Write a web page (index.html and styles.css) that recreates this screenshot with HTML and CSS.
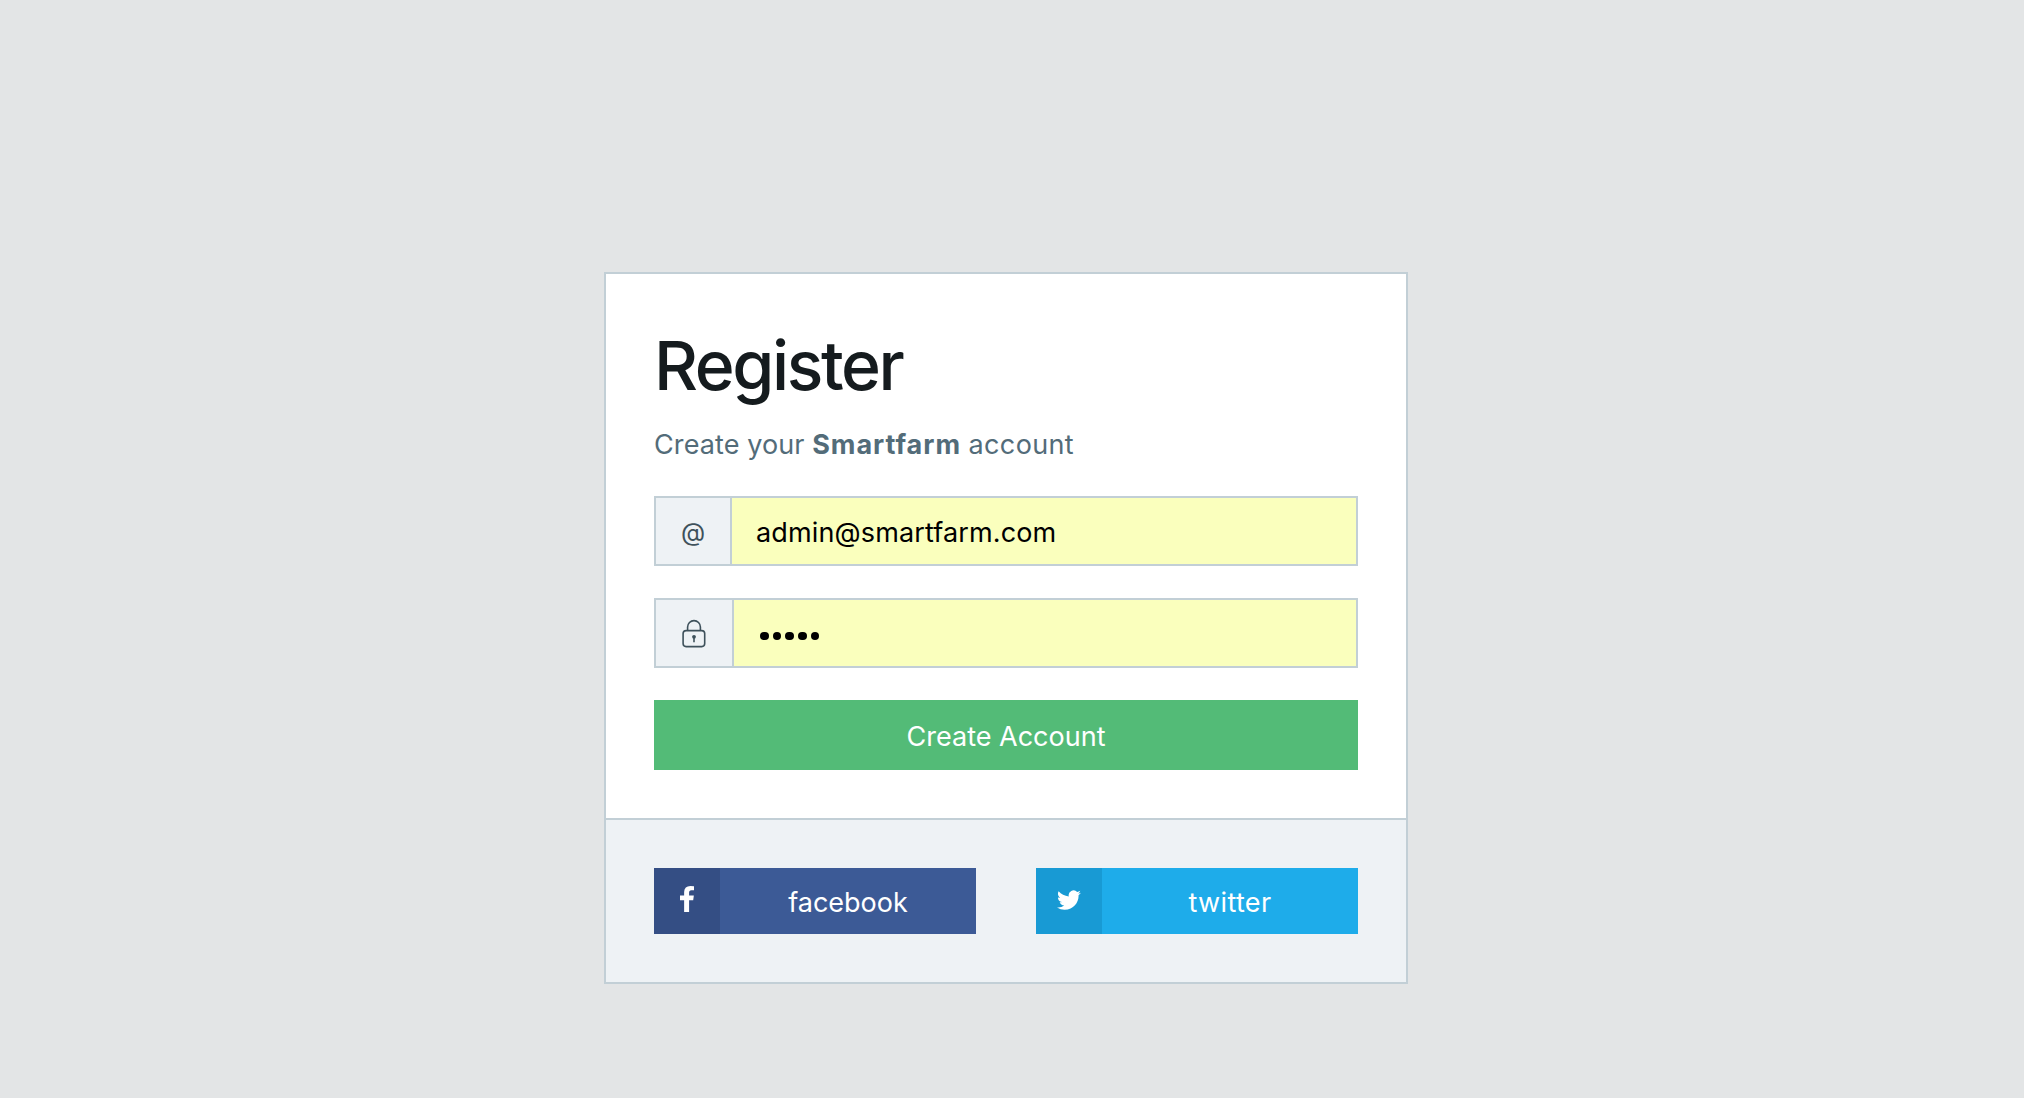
FILE: index.html
```html
<!DOCTYPE html>
<html lang="en">
<head>
<meta charset="utf-8">
<title>Register</title>
<link rel="stylesheet" href="styles.css">
</head>
<body>
<main class="card">
  <form class="card-body">
    <h1 class="title">Register</h1>
    <p class="lead"><span class="lead-start">Create your</span> <strong>Smartfarm</strong> <span class="lead-end">account</span></p>
    <div class="input-group">
      <span class="addon">@</span>
      <div class="field"><span class="email">admin@smartfarm.com</span></div>
    </div>
    <div class="input-group">
      <span class="addon addon-lock">
        <svg class="lock" width="24" height="30" viewBox="0 0 24 30" fill="none" stroke="currentColor" stroke-width="1.6">
          <rect x="1.1" y="11.6" width="21.6" height="16" rx="3"/>
          <path d="M5.6 11.5V8a6.4 6.4 0 0 1 12.8 0v3.5"/>
          <circle cx="12" cy="17.8" r="1.9" fill="currentColor" stroke="none"/>
          <path d="M12 18v5.2"/>
        </svg>
      </span>
      <div class="field field-password"><span class="dot"></span><span class="dot"></span><span class="dot"></span><span class="dot"></span><span class="dot"></span></div>
    </div>
    <button class="submit" type="button"><span>Create Account</span></button>
  </form>
  <footer class="card-footer">
    <a class="social facebook">
      <span class="social-icon">
        <svg class="fb" width="14" height="26" viewBox="95 -1536 864 1664" preserveAspectRatio="none" fill="#fff"><path d="M959 -1524V-1260H802Q716 -1260 686 -1224Q656 -1188 656 -1116V-927H949L910 -631H656V128H350V-631H95V-927H350V-1145Q350 -1331 454 -1433.500Q558 -1536 731 -1536Q878 -1536 959 -1524Z"/></svg>
      </span>
      <span class="social-label">facebook</span>
    </a>
    <a class="social twitter">
      <span class="social-icon">
        <svg class="tw" width="24" height="20" viewBox="0 1.8 24 20.3" preserveAspectRatio="none" fill="#fff"><path d="M23.950 4.570a10 10 0 0 1-2.820.770 4.960 4.960 0 0 0 2.160-2.720c-.950.550-2 .960-3.130 1.180a4.920 4.920 0 0 0-8.380 4.480C7.690 8.090 4.070 6.130 1.640 3.160a4.820 4.820 0 0 0-.670 2.480c0 1.710.870 3.210 2.190 4.100a4.900 4.900 0 0 1-2.230-.620v.060a4.920 4.920 0 0 0 3.950 4.830 5 5 0 0 1-2.210.080 4.940 4.940 0 0 0 4.600 3.420A9.870 9.870 0 0 1 0 19.540a13.990 13.990 0 0 0 7.560 2.210c9.050 0 14-7.500 14-13.980 0-.210 0-.420-.020-.630a9.940 9.940 0 0 0 2.410-2.570z"/></svg>
      </span>
      <span class="social-label">twitter</span>
    </a>
  </footer>
</main>
</body>
</html>
```
FILE: styles.css
```css
* { box-sizing: border-box; }

body {
  margin: 0;
  padding: 272px 616px 114px 604px;
  background: #e3e5e6;
  font-family: Inter, "Liberation Sans", sans-serif;
  font-size: 27px;
  line-height: 42px;
  color: #151b1e;
}

.card {
  width: 804px;
  height: 712px;
  border: 2px solid #c2cfd6;
  background: #fff;
}

.card-body {
  height: 546px;
  padding: 49px 48px 48px;
  border-bottom: 2px solid #c2cfd6;
}

.title {
  margin: 0 0 17px;
  font-size: 68px;
  font-weight: 500;
  line-height: 84px;
  letter-spacing: -2.4px;
}

.lead {
  margin: 0 0 30px;
  color: #536c79;
}

.lead-start { letter-spacing: 0.1px; }
.lead-end { letter-spacing: 0.35px; }

.lead strong {
  font-weight: 700;
  letter-spacing: 0.95px;
}

.input-group {
  display: flex;
  height: 70px;
  margin-bottom: 32px;
  border: 2px solid #c2cfd6;
}

.addon {
  display: flex;
  align-items: center;
  justify-content: center;
  width: 76px;
  padding-top: 2px;
  border-right: 2px solid #c2cfd6;
  background: #eef2f5;
  color: #3e515b;
  font-size: 25px;
}

.addon-lock { width: 78px; }

.field {
  display: flex;
  align-items: center;
  flex: 1;
  padding: 4px 24px 0;
  background: #faffbd;
  color: #000;
}

.email { letter-spacing: 0.14px; }

.field-password {
  gap: 4px;
  padding: 6px 26px 0;
}

.dot {
  width: 8.7px;
  height: 8.7px;
  border-radius: 50%;
  background: #000;
}

.submit {
  display: flex;
  align-items: center;
  justify-content: center;
  width: 100%;
  height: 70px;
  padding: 4px 0 0;
  border: 0;
  background: #53bb77;
  color: #fff;
  font: inherit;
}

.card-footer {
  display: flex;
  gap: 60px;
  height: 162px;
  padding: 48px;
  background: #eef2f5;
}

.social {
  display: flex;
  flex: 1;
  height: 66px;
  color: #fff;
}

.social-icon {
  display: flex;
  align-items: center;
  justify-content: center;
  width: 66px;
  padding-bottom: 4px;
}

.twitter .social-icon { padding-bottom: 2px; }

.social-label {
  flex: 1;
  padding-top: 14px;
  text-align: center;
}

.twitter .social-label { letter-spacing: 0.35px; }

.facebook { background: #3c5a96; }
.facebook .social-icon { background: #344e84; }
.twitter { background: #1eacea; }
.twitter .social-icon { background: #189ad4; }
```
